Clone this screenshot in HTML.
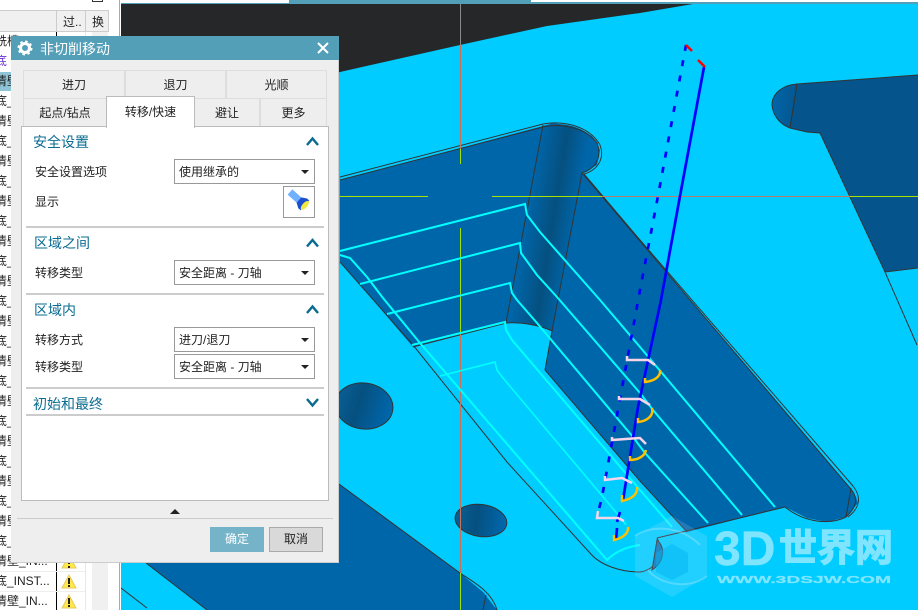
<!DOCTYPE html>
<html><head><meta charset="utf-8"><style>
html,body{margin:0;padding:0;background:#fff}
#p{position:relative;width:918px;height:610px;overflow:hidden;font:12px/16px "Liberation Sans","Noto Sans CJK SC",sans-serif;color:#222}
#p div,#p span.a{position:absolute;box-sizing:border-box;white-space:nowrap}
.r{left:-5px;width:56px;height:16px;line-height:16px}
.t{background:#eee;border:1px solid #ddd;text-align:center;line-height:28px}
.s{left:26px;width:298px;height:2px;background:#ccc}
.h{left:33px;font-size:14px;line-height:18px;color:#0a6c90}
.l{left:35px}
.d{left:174px;width:141px;height:25px;border:1px solid #999;background:#fff;line-height:24px;padding-left:4px}
.d:after{content:"";position:absolute;right:5px;top:10px;border:4px solid transparent;border-top:4px solid #222;border-bottom:0}
svg{position:absolute;left:0;top:0}
</style></head><body><div id="p">

<svg width="918" height="610" viewBox="0 0 918 610">
<defs>
<linearGradient id="g1" gradientUnits="userSpaceOnUse" x1="528" y1="200" x2="578" y2="208"><stop offset="0" stop-color="#0066aa"/><stop offset=".55" stop-color="#05507f"/><stop offset="1" stop-color="#0066aa"/></linearGradient>
<linearGradient id="g2" gradientUnits="userSpaceOnUse" x1="335" y1="400" x2="393" y2="410"><stop offset="0" stop-color="#0a5f96"/><stop offset=".4" stop-color="#05507f"/><stop offset="1" stop-color="#0068ae"/></linearGradient>
<linearGradient id="g3" gradientUnits="userSpaceOnUse" x1="455" y1="520" x2="506" y2="520"><stop offset="0" stop-color="#0a5f96"/><stop offset=".42" stop-color="#05507f"/><stop offset="1" stop-color="#0068ae"/></linearGradient>
<linearGradient id="g4" gradientUnits="userSpaceOnUse" x1="772" y1="105" x2="797" y2="108"><stop offset="0" stop-color="#0066aa"/><stop offset="1" stop-color="#05558c"/></linearGradient>
<linearGradient id="g5" gradientUnits="userSpaceOnUse" x1="291" y1="191" x2="297" y2="200"><stop offset="0" stop-color="#6fb0ff"/><stop offset="1" stop-color="#0c2f9a"/></linearGradient>
</defs>
<rect width="918" height="610" fill="#00ccff"/>
<polygon points="121,0 693,0 693,4 640,13 547,26 460,45 340,72 121,120" fill="#262729"/>
<rect x="121" y="0" width="168" height="3" fill="#fff"/><rect x="121" y="3" width="168" height="1" fill="#539fb8"/>
<rect x="289" y="0" width="242" height="4" fill="#539fb8"/>
<rect x="531" y="0" width="387" height="2" fill="#fff"/><rect x="531" y="2" width="387" height="2" fill="#539fb8"/>

<!-- right block -->
<polygon points="797,84 918,75 918,268 885,272 820,133 807,132 790,128" fill="#05558c"/>
<path d="M797,84 C782,85 772,94 772,105 C773,116 780,124 790,128 Z" fill="url(#g4)"/>
<path d="M918,75 L797,84 C782,85 772,94 772,105 C773,116 780,124 790,128 L807,132 L820,133 L885,272 L918,268 M797,84 L790,128 M885,272 L917,345" fill="none" stroke="#333" stroke-width="1"/>

<!-- main pocket -->
<polygon points="340,180 543,126 553,123 575,127 592,136 600,150 597,165 582,173 850,488 856,497 858,503 846,517 827,522 807,518 785,507 687,532 640,481 545,370 552,331 535,323 505,322 413,347 373,300 340,262" fill="#0066aa"/>
<path d="M543,126 C560,121 585,126 597,142 C602,155 597,168 582,173 L552,331 C540,325 520,322 506,323 Z" fill="url(#g1)"/>
<g fill="none" stroke="#333" stroke-width="1">
<path d="M340,180 L543,127 C560,123 585,127 597,143 C602,156 597,168 582,173 L850,488 C858,497 858,506 846,517 C830,525 805,523 785,507 L657,538"/>
<path d="M340,177 L543,124 C565,120 590,127 600,145 C605,158 598,170 584,174 L640,240 L853,486 C861,496 861,507 848,517"/>
<path d="M543,125 L506,323 M582,173 L552,331 M851,488 L846,517"/>
<path d="M552,331 C540,325 520,322 506,323 L413,347"/>
<path d="M552,331 L545,370 L640,481 L687,532"/>
<path d="M340,262 L413,345 L507,462 L590,553 C600,565 620,572 640,572 C655,570 666,555 657,538"/>
</g>
<path d="M657,540 L652,570 C664,562 666,548 657,540Z" fill="#0b72b4" stroke="#333"/>

<!-- holes -->
<ellipse cx="364" cy="406" rx="29" ry="23" transform="rotate(8 364 406)" fill="url(#g2)" stroke="#333"/>
<ellipse cx="481" cy="520.500" rx="26" ry="16" transform="rotate(8 481 520)" fill="url(#g3)" stroke="#333"/>

<!-- lower-left -->
<polygon points="146,563 339,563 339,484 460,573 483,592 497,610 207,610" fill="#0066aa"/>
<path d="M146,563 L207,610 M339,484 L460,573 C475,583 492,592 497,610 M486,595 L483,610 M121,588 L147,608" fill="none" stroke="#333"/>

<!-- cross-hair -->
<g shape-rendering="crispEdges" fill="none" stroke-width="1">
<path d="M460.500,4 V45" stroke="#8a8a8a"/>
<path d="M460.500,45 V149 M460.500,333 V573" stroke="#c8725c"/>
<path d="M460.500,149 V164 M460.500,228 V333 M460.500,573 V610" stroke="#a0e000"/>
<path d="M340,196.500 H428 M492,196.500 H602 M850,196.500 H918" stroke="#a8e000"/>
<path d="M602,196.500 H850" stroke="#c07868"/>
</g>

<!-- toolpaths -->
<g fill="none" stroke="#00ffff" stroke-width="2">
<path d="M340,251 L525,204 L527,215 L540,232 L600,300 L640,347 L775,507"/>
<path d="M360,284 L520,243 L521,253 L537,275 L557,297 L640,393 L653,410 L742,515"/>
<path d="M387,314 L510,283 L512,293 L517,300 L537,323 L633,437 L645,453 L708,523"/>
<path d="M340,255 L350,258 L367,277 L383,298 L420,343 L607,560 C615,552 625,547 640,545"/>
<path d="M412,345 L505,322 L506,330 L512,340 L640,490 L672,527"/>
<path d="M440,376 L495,362 L497,370 L503,378 L620,517 L626,525" stroke-width="1.600"/>
</g>

<!-- blue tool axis -->
<g fill="none" stroke="#0000ff" stroke-width="2.700">
<path d="M704,67 L680,196 L661,300 L638,407 L623,500"/>
<path d="M620,512 L617,522 M617,528 L616,540"/>
<path d="M686,45 L658,196 L640,290 L602,497 L598,513" stroke-dasharray="6 9.500"/>
</g>
<path d="M686,45 L692,51 M698,60 L705,67" stroke="#ff0000" stroke-width="2.500" fill="none"/>
<g fill="none" stroke="#f8d4ea" stroke-width="2.500">
<path d="M627,356 V360 H648 L655,365"/>
<path d="M619,396 V399 H640 L650,405"/>
<path d="M612,437 V440 L640,438 L646,444"/>
<path d="M605,476 V480 L622,478 L632,483"/>
<path d="M598,511 L597,518 H618 L624,521"/>
</g>
<g fill="none" stroke="#ffc000" stroke-width="2.500">
<path d="M660,370 C661,376 655,381 645,382 V378"/>
<path d="M652,408 C654,415 648,421 638,422 V418"/>
<path d="M646,450 C645,456 638,460 630,460 V456"/>
<path d="M637,487 C638,494 632,499 622,501 V495"/>
<path d="M628,527 C629,533 623,538 614,540 V535"/>
</g>

<!-- watermark logo -->
<g opacity=".16">
<polygon points="672,516 707,536 707,576 672,597 635,576 635,536" fill="#cfe8ff"/>
</g>
<polygon points="672,544 688,553 688,572 672,580 656,572 656,553" fill="#00b4f0" opacity=".5"/>
<path d="M635,536 C650,525 680,525 700,545 M707,576 C690,590 660,585 648,570" stroke="#9fe6ff" stroke-width="2" fill="none" opacity=".4"/>
<g fill="#7fe5ff" stroke="#7fe5ff" style="font-weight:bold">
<text x="714" y="565" font-family="Liberation Sans" font-size="48" stroke-width=".4">3D</text>
<text x="779" y="561" font-family="Noto Sans CJK SC" font-size="38" stroke-width="1.200">世界网</text>
<text x="717" y="583" font-family="Liberation Sans" font-size="10" stroke-width=".2" textLength="174" lengthAdjust="spacingAndGlyphs">WWW.3DSJW.COM</text>
</g>
</svg>

<!-- left panel -->
<div style="left:0;top:0;width:119px;height:610px;background:#fff"></div>
<div style="left:119px;top:0;width:2px;height:610px;background:#a9a9a9;border-right:1px solid #fff"></div>
<div style="left:92px;top:0;width:11px;height:2px;border:1px solid #333;border-top:0"></div>
<div style="left:0;top:10px;width:109px;height:22px;background:#f0f0f0;border-top:1px solid #ccc;border-bottom:1px solid #ccc;border-right:1px solid #ccc"></div>
<div style="left:56px;top:10px;width:1px;height:22px;background:#ccc"></div>
<div style="left:85px;top:10px;width:1px;height:22px;background:#ccc"></div>
<div style="left:63px;top:14px">过..</div>
<div style="left:92px;top:14px">换</div>
<div style="left:92px;top:32px;width:16px;height:578px;background:#f0f0f0"></div>
<div style="left:56px;top:32px;width:1px;height:578px;background:#000"></div>
<div style="left:85px;top:32px;width:1px;height:578px;background:#e8e8e8"></div>
<div style="left:0;top:72px;width:14px;height:19px;background:#8fc4d6"></div>
<div class="r" style="top:33px">铣槽</div>
<div class="r" style="top:53px;color:#6a2fd0">底</div>
<div class="r" style="top:73px">清壁</div>
<div class="r" style="top:93px">底_</div><div class="r" style="top:113px">清壁</div>
<div class="r" style="top:133px">底_</div><div class="r" style="top:153px">清壁</div>
<div class="r" style="top:173px">底_</div><div class="r" style="top:193px">清壁</div>
<div class="r" style="top:213px">底_</div><div class="r" style="top:233px">清壁</div>
<div class="r" style="top:253px">底_</div><div class="r" style="top:273px">清壁</div>
<div class="r" style="top:293px">底_</div><div class="r" style="top:313px">清壁</div>
<div class="r" style="top:333px">底_</div><div class="r" style="top:353px">清壁</div>
<div class="r" style="top:373px">底_</div><div class="r" style="top:393px">清壁</div>
<div class="r" style="top:413px">底_</div><div class="r" style="top:433px">清壁</div>
<div class="r" style="top:453px">底_</div><div class="r" style="top:473px">清壁</div>
<div class="r" style="top:493px">底_</div><div class="r" style="top:513px">清壁</div>
<div class="r" style="top:533px">底_</div>
<div class="r" style="top:553px">清壁_IN...</div>
<div class="r" style="top:573px">底_INST...</div>
<div class="r" style="top:593px">清壁_IN...</div>
<div style="left:0;top:571px;width:85px;height:1px;background:#eee"></div>
<div style="left:0;top:591px;width:85px;height:1px;background:#eee"></div>
<svg width="918" height="610" viewBox="0 0 918 610" style="pointer-events:none">
<g id="w"><polygon points="69,555 76,568 62,568" fill="#ffe84a" stroke="#e8c860"/><path d="M69,558 V564 M69,566 V568" stroke="#222" stroke-width="2"/></g>
<g><polygon points="69,575 76,588 62,588" fill="#ffe84a" stroke="#e8c860"/><path d="M69,578 V584 M69,585 V587" stroke="#222" stroke-width="2"/></g>
<g><polygon points="69,595 76,608 62,608" fill="#ffe84a" stroke="#e8c860"/><path d="M69,598 V604 M69,605 V607" stroke="#222" stroke-width="2"/></g>
</svg>

<!-- dialog -->
<div style="left:11px;top:36px;width:328px;height:527px;background:#eee;border-right:1px solid #ccc;border-bottom:1px solid #ccc"></div>
<div style="left:11px;top:36px;width:328px;height:24px;background:#539fb8"></div>
<div style="left:40px;top:40px;font-size:14px;line-height:18px;color:#fff;letter-spacing:0">非切削移动</div>
<svg width="918" height="610" viewBox="0 0 918 610">
<circle cx="25" cy="48" r="4.500" fill="none" stroke="#fff" stroke-width="3"/>
<circle cx="25" cy="48" r="6.500" fill="none" stroke="#fff" stroke-width="2" stroke-dasharray="2.500 2.600"/>
<path d="M318,43 L328,53 M328,43 L318,53" stroke="#fff" stroke-width="2"/>
</svg>
<div class="t" style="left:23px;top:70px;width:102px;height:29px">进刀</div>
<div class="t" style="left:125px;top:70px;width:101px;height:29px">退刀</div>
<div class="t" style="left:226px;top:70px;width:101px;height:29px">光顺</div>
<div class="t" style="left:23px;top:98px;width:84px;height:29px">起点/钻点</div>
<div class="t" style="left:194px;top:98px;width:66px;height:29px">避让</div>
<div class="t" style="left:260px;top:98px;width:67px;height:29px">更多</div>
<div style="left:21px;top:126px;width:308px;height:375px;background:#fff;border:1px solid #bbb"></div>
<div style="left:106px;top:96px;width:89px;height:32px;background:#fff;border:1px solid #bbb;border-bottom:0;text-align:center;line-height:30px">转移/快速</div>

<div class="h" style="top:133px">安全设置</div>
<div class="l" style="top:164px">安全设置选项</div>
<div class="d" style="top:159px">使用继承的</div>
<div class="l" style="top:194px">显示</div>
<div style="left:283px;top:186px;width:32px;height:32px;background:#fff;border:1px solid #999"></div>
<svg width="918" height="610" viewBox="0 0 918 610">
<g transform="translate(290,192) rotate(42)">
<rect x="0" y="-3.500" width="12" height="7" fill="url(#g5)"/>
<polygon points="12,-3.500 17,-6.500 20,-6.500 20,6.500 17,6.500 12,3.500" fill="#1c4fd0"/>
<ellipse cx="20" cy="0" rx="2.500" ry="5.500" fill="#f2e840"/>
</g>
<g fill="none" stroke="#0a6c90" stroke-width="2.500">
<path d="M307,145 L312.500,138.500 L318,145"/>
<path d="M307,246.500 L312.500,240 L318,246.500"/>
<path d="M307,313 L312.500,306.500 L318,313"/>
<path d="M307,399 L312.500,405.500 L318,399"/>
</g>
</svg>
<div class="s" style="top:226px"></div>
<div class="h" style="left:34px;top:234px">区域之间</div>
<div class="l" style="top:265px">转移类型</div>
<div class="d" style="top:260px">安全距离 - 刀轴</div>
<div class="s" style="top:293px"></div>
<div class="h" style="left:34px;top:301px">区域内</div>
<div class="l" style="top:332px">转移方式</div>
<div class="d" style="top:327px">进刀/退刀</div>
<div class="l" style="top:359px">转移类型</div>
<div class="d" style="top:354px">安全距离 - 刀轴</div>
<div class="s" style="top:387px"></div>
<div class="h" style="top:395px">初始和最终</div>
<div class="s" style="top:414px"></div>

<div style="left:170px;top:509px;width:0;height:0;border:5px solid transparent;border-bottom:5px solid #222;border-top:0"></div>
<div style="left:17px;top:518px;width:316px;height:1px;background:#ccc"></div>
<div style="left:210px;top:527px;width:54px;height:25px;background:#74b3c8;color:#fff;text-align:center;line-height:25px">确定</div>
<div style="left:269px;top:527px;width:54px;height:25px;background:#d9d9d9;border:1px solid #aaa;text-align:center;line-height:23px">取消</div>
</div></body></html>
